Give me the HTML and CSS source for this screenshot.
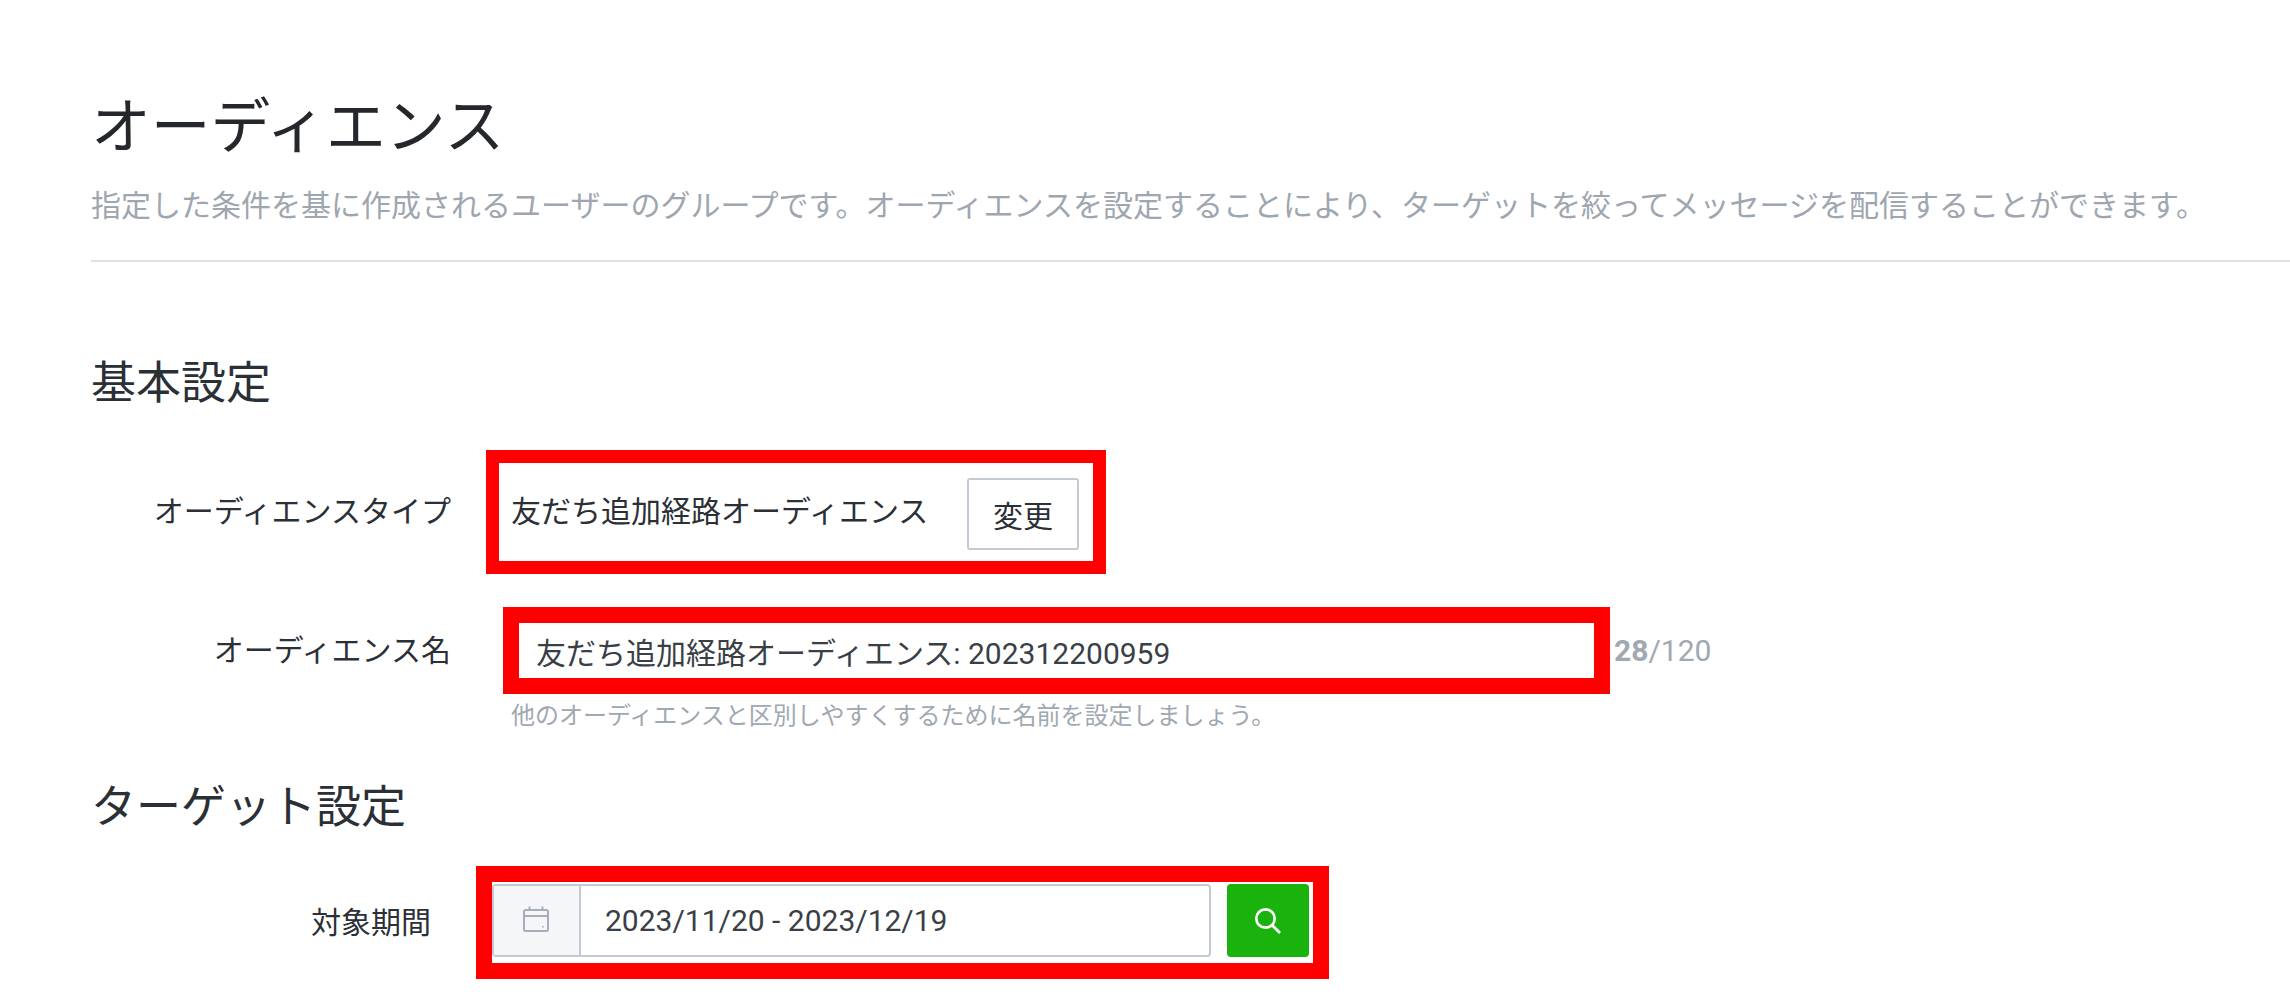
FILE: index.html
```html
<!DOCTYPE html>
<html lang="ja">
<head>
<meta charset="utf-8">
<title>オーディエンス</title>
<link rel="stylesheet" href="styles.css">
</head>
<body>
<main class="page">
  <header class="page-head">
    <h1 class="title">オーディエンス</h1>
    <p class="lead">指定した条件を基に作成されるユーザーのグループです。オーディエンスを設定することにより、ターゲットを絞ってメッセージを配信することができます。</p>
  </header>
  <section class="section-basic">
    <h2 class="heading">基本設定</h2>
    <div class="row row-type">
      <div class="label">オーディエンスタイプ</div>
      <div class="mark mark-type">
        <span class="value">友だち追加経路オーディエンス</span>
        <button class="btn" type="button">変更</button>
      </div>
    </div>
    <div class="row row-name">
      <div class="label">オーディエンス名</div>
      <div class="mark mark-name">友だち追加経路オーディエンス: 202312200959</div>
      <div class="counter"><b>28</b>/120</div>
    </div>
    <p class="hint">他のオーディエンスと区別しやすくするために名前を設定しましょう。</p>
  </section>
  <section class="section-target">
    <h2 class="heading">ターゲット設定</h2>
    <div class="row row-period">
      <div class="label label-period">対象期間</div>
      <div class="mark mark-period">
        <div class="date-field">
          <span class="addon">
            <svg class="cal" viewBox="0 0 28 28" width="28" height="28" fill="none" stroke="#a6aeb9" stroke-width="2">
              <rect x="2" y="5" width="24" height="21" rx="1.5"/>
              <path d="M2 11H26M7.5 1.5V5M20.5 1.5V5"/>
              <rect x="20" y="21" width="1.6" height="1.6" fill="#a6aeb9" stroke="none"/>
            </svg>
          </span>
          <span class="date">2023/11/20 - 2023/12/19</span>
        </div>
        <button class="search" type="button" aria-label="検索">
          <svg viewBox="0 0 28 28" width="28" height="28" fill="none" stroke="#fff" stroke-width="2.7">
            <circle cx="11.5" cy="11.5" r="9.2"/>
            <path d="M18.2 18.2L26 26"/>
          </svg>
        </button>
      </div>
    </div>
  </section>
</main>
</body>
</html>
```
FILE: styles.css
```css
* { box-sizing: border-box; }
html, body { margin: 0; height: 100%; background: #fff; overflow: hidden; }
body {
  font-family: Roboto, "Noto Sans CJK JP", sans-serif;
  color: #2b2f36;
  font-weight: 400;
}
.page { padding: 93px 0 0 91px; }
.page-head { border-bottom: 2px solid #dfe1e3; height: 169px; }
.title { margin: 0; font-size: 59.8px; line-height: 70px; font-weight: 400; color: #24272c; }
.lead { margin: 23px 0 0; font-size: 30px; line-height: 40px; color: #9ea6af; white-space: nowrap; }
.section-basic { padding-top: 92px; }
.heading { margin: 0; font-size: 45px; line-height: 60px; font-weight: 400; color: #2b2f36; }
.row { display: flex; align-items: center; }
.label { width: 360px; flex: none; text-align: right; font-size: 30px; line-height: 40px; color: #2b2f36; }
.mark { border-style: solid; border-color: #ff0000; background: #fff; flex: none; }
.row-type { margin-top: 36px; }
.mark-type {
  margin-left: 35px;
  width: 620px; height: 124px;
  border-width: 13px;
  display: flex; align-items: center;
  padding-left: 12px;
}
.value { font-size: 30px; line-height: 40px; width: 456px; flex: none; }
.btn {
  width: 112px; height: 72px;
  margin-top: 4px;
  font: inherit; font-size: 30px; color: #2b2f36;
  background: #fff;
  border: 2px solid #c3cad4; border-radius: 3px;
  padding: 0;
}
.row-name { margin-top: 33px; }
.mark-name {
  margin-left: 52px;
  width: 1107px; height: 87px;
  border-width: 16px;
  padding-left: 17px;
  font-size: 30px; line-height: 62px; color: #3a3f47; white-space: nowrap;
}
.counter { margin-left: 4px; font-size: 30px; line-height: 40px; color: #a0a8b1; }
.counter b { font-weight: 700; }
.hint { margin: 5px 0 0 420px; font-size: 24px; line-height: 34px; color: #a0a8b1; white-space: nowrap; }
.section-target { padding-top: 45px; }
.row-period { margin-top: 28px; }
.label-period { width: 340px; }
.mark-period {
  margin-left: 45px;
  width: 853px; height: 113px;
  border-width: 16px;
  padding: 2px 4px 0 0;
  display: flex; align-items: flex-start;
}
.date-field {
  width: 719px; height: 73px;
  display: flex;
  border: 2px solid #c3cad4; border-radius: 4px;
  background: #fff;
}
.addon {
  width: 87px; flex: none;
  background: #f5f6f8;
  border-right: 2px solid #c3cad4;
  display: flex; align-items: center; justify-content: center;
  padding: 0 2px 4px 0;
}
.date { padding-left: 24px; font-size: 30px; line-height: 69px; color: #3a3f47; white-space: nowrap; }
.search {
  margin-left: 16px;
  width: 82px; height: 73px;
  background: #1ab20c; border: 0; border-radius: 4px; padding: 0;
  display: flex; align-items: center; justify-content: center;
}
```
